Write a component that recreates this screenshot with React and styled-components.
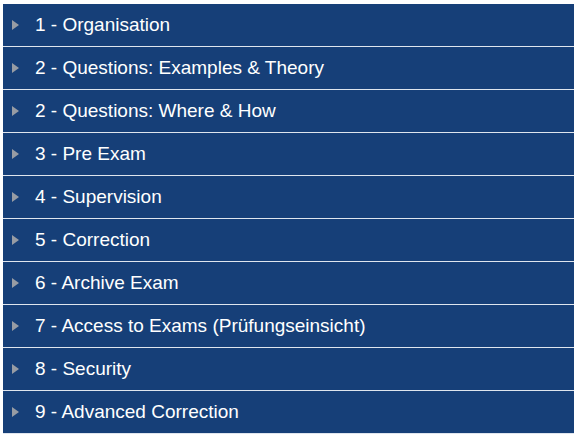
import React from 'react';
import styled, { createGlobalStyle } from 'styled-components';

const Global = createGlobalStyle`
    body {
        margin:0;
        background:#fff;
        font-family:"Liberation Sans", Arial, sans-serif;
    }
`

const Wrap = styled.div`
    padding:4px 3px 0 3px;
`

const List = styled.div`
    display:flex;
    flex-direction:column;
    width:571px;
`

const Row = styled.div`
    display:flex;
    align-items:center;
    height:42px;
    background:#163f78;
    border-bottom:1px solid #dfe5ee;
    color:#fff;
    font-size:19px;
    cursor:pointer;
`

const Arrow = styled.span`
    flex:0 0 auto;
    width:0;
    height:0;
    margin:0 16px 0 9px;
    border-top:5.5px solid transparent;
    border-bottom:5.5px solid transparent;
    border-left:7px solid #979ca4;
`

const Label = styled.span`
    line-height:42px;
    white-space:nowrap;
`

const items = [
    '1 - Organisation',
    '2 - Questions: Examples & Theory',
    '2 - Questions: Where & How',
    '3 - Pre Exam',
    '4 - Supervision',
    '5 - Correction',
    '6 - Archive Exam',
    '7 - Access to Exams (Prüfungseinsicht)',
    '8 - Security',
    '9 - Advanced Correction',
];

export default function App() {
    return (
        <Wrap>
            <Global />
            <List>
                {items.map((t) => (
                    <Row key={t}>
                        <Arrow />
                        <Label>{t}</Label>
                    </Row>
                ))}
            </List>
        </Wrap>
    );
}
